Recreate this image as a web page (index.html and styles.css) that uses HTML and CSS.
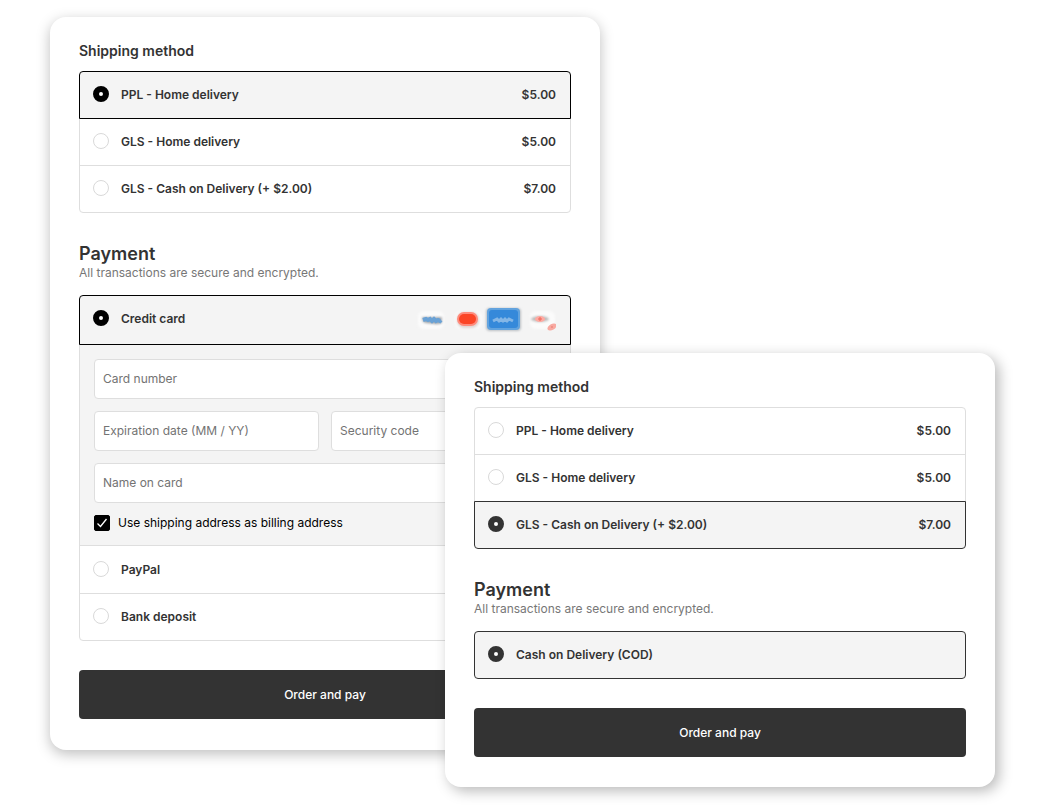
FILE: index.html
```html
<!DOCTYPE html>
<html lang="en">
<head>
<meta charset="utf-8">
<meta name="viewport" content="width=device-width, initial-scale=1">
<title>Checkout</title>
<link rel="stylesheet" href="styles.css">
</head>
<body>
<main class="stage">
  <form class="card">
    <h2 class="heading">Shipping method</h2>
    <div class="options">
      <label class="option"><input class="radio" type="radio" name="ship-a" checked><span class="name">PPL - Home delivery</span><span class="price">$5.00</span></label>
      <label class="option"><input class="radio" type="radio" name="ship-a"><span class="name">GLS - Home delivery</span><span class="price">$5.00</span></label>
      <label class="option"><input class="radio" type="radio" name="ship-a"><span class="name">GLS - Cash on Delivery (+ $2.00)</span><span class="price">$7.00</span></label>
    </div>
    <h2 class="title">Payment</h2>
    <p class="note">All transactions are secure and encrypted.</p>
    <div class="options">
      <label class="option option-tall"><input class="radio" type="radio" name="pay-a" checked><span class="name">Credit card</span>
        <svg class="brands" width="142" height="30" viewBox="0 -2 142 30" aria-hidden="true">
          <defs>
            <filter id="soft" x="-30%" y="-30%" width="160%" height="160%"><feGaussianBlur stdDeviation="1.2"/></filter>
            <filter id="fine" x="-30%" y="-30%" width="160%" height="160%"><feGaussianBlur stdDeviation=".7"/></filter>
          </defs>
          <g filter="url(#soft)">
            <rect x="4" y="5" width="26" height="18" rx="6" fill="#fbfbfb"/>
            <path d="M8 11h20v6q-3 2-8 1l-9-1q-3-1-3-6z" fill="#a0a5aa"/>
            <rect x="41" y="5" width="27" height="18" rx="6" fill="#fafafa"/>
            <rect x="43" y="6" width="22" height="16" rx="7" fill="#e0d4d2"/>
            <rect x="116" y="5" width="25" height="18" rx="6" fill="#fbfbfb"/>
            <ellipse cx="126" cy="13" rx="9" ry="3" fill="#bbb"/>
            <rect x="72" y="2" width="35" height="23" rx="4" fill="#bcc0c4"/>
          </g>
          <g filter="url(#fine)">
            <path d="M9 14l3-1 2 1 2-1 2 2 2-2 2 2 2-1 2 1 1-1" fill="none" stroke="#6aa2d6" stroke-width="4"/>
            <rect x="43" y="6" width="21" height="14" rx="7" fill="#ff8b7c"/>
            <rect x="45" y="8" width="17" height="10" rx="5" fill="#fb4427"/>
            <rect x="73" y="2" width="33" height="22" rx="4" fill="#62a3de"/>
            <rect x="75" y="4" width="29" height="18" rx="3" fill="#3489da"/>
            <path d="M79 15l4-2 2 2 2-2 2 2 2-2 2 2 2-2 4 2" fill="none" stroke="#84b6e6" stroke-width="3"/>
            <ellipse cx="126" cy="13" rx="5" ry="3" fill="#ffaaa2"/>
            <path d="M124 13h4M126 11v4" stroke="#ef6658"/>
            <ellipse cx="138" cy="21" rx="5" ry="3" transform="rotate(-30 138 21)" fill="#f8a9a1"/>
            <path d="M137 21h2" stroke="#e9786d"/>
          </g>
        </svg>
      </label>
      <div class="fields">
        <input class="field wide" type="text" placeholder="Card number" aria-label="Card number">
        <input class="field" type="text" placeholder="Expiration date (MM / YY)" aria-label="Expiration date (MM / YY)">
        <input class="field" type="text" placeholder="Security code" aria-label="Security code">
        <input class="field wide" type="text" placeholder="Name on card" aria-label="Name on card">
        <label class="same wide">
          <span class="tick"><input class="box" type="checkbox" checked>
            <svg class="mark" width="16" height="16" viewBox="0 0 16 16" aria-hidden="true"><path d="M3.5 8.5l3 3 6-7.500" fill="none" stroke="#fff" stroke-width="1.300"/></svg>
          </span>Use shipping address as billing address</label>
      </div>
      <label class="option option-after"><input class="radio" type="radio" name="pay-a"><span class="name">PayPal</span></label>
      <label class="option"><input class="radio" type="radio" name="pay-a"><span class="name">Bank deposit</span></label>
    </div>
    <button class="submit" type="button">Order and pay</button>
  </form>

  <form class="card card-front">
    <h2 class="heading">Shipping method</h2>
    <div class="options">
      <label class="option"><input class="radio" type="radio" name="ship-b"><span class="name">PPL - Home delivery</span><span class="price">$5.00</span></label>
      <label class="option"><input class="radio" type="radio" name="ship-b"><span class="name">GLS - Home delivery</span><span class="price">$5.00</span></label>
      <label class="option"><input class="radio" type="radio" name="ship-b" checked><span class="name">GLS - Cash on Delivery (+ $2.00)</span><span class="price">$7.00</span></label>
    </div>
    <h2 class="title">Payment</h2>
    <p class="note">All transactions are secure and encrypted.</p>
    <div class="options">
      <label class="option"><input class="radio" type="radio" name="pay-b" checked><span class="name">Cash on Delivery (COD)</span></label>
    </div>
    <button class="submit" type="button">Order and pay</button>
  </form>
</main>
</body>
</html>
```

FILE: styles.css
```css
* { box-sizing: border-box; }

body {
  min-height: 100vh;
  margin: 0;
  padding: 17px 53px 17px 50px;
  background: #fff;
  color: #333;
  font: 500 12px/20px Inter, "Liberation Sans", sans-serif;
}

.stage {
  position: relative;
  padding-bottom: 37px;
}

.card {
  --accent: #000;
  width: 58.2%;
  padding: 24px 29px 31px;
  background: #fff;
  border-radius: 16px;
  box-shadow: 0 4px 14px rgba(0, 0, 0, .26);
}

.card-front {
  --accent: #333;
  position: absolute;
  right: 0;
  bottom: 0;
  padding-bottom: 30px;
  box-shadow: 4px 4px 14px rgba(0, 0, 0, .28);
}

.heading {
  margin: 0 0 10px;
  font-size: 14px;
  font-weight: 600;
  line-height: 20px;
}

.title {
  margin: 31px 0 0;
  font-size: 18px;
  font-weight: 600;
  line-height: 20px;
}

.note {
  margin: 0 0 13px;
  color: #777;
  font-weight: 400;
  line-height: 18px;
}

.option {
  position: relative;
  display: flex;
  align-items: center;
  gap: 12px;
  height: 48px;
  margin-top: -1px;
  padding: 0 14px 0 13px;
  border: 1px solid #dedede;
  font-weight: 600;
}

.option:first-child {
  margin-top: 0;
  border-radius: 4px 4px 0 0;
}

.option:last-child { border-radius: 0 0 4px 4px; }
.option:only-child { border-radius: 4px; }
.option-tall { height: 50px; padding-bottom: 3px; }
.option-after { margin-top: 0; border-top: 0; }

.option:has(:checked) {
  z-index: 1;
  background: #f4f4f4;
  border-color: var(--accent);
}

.name { flex: 1; }

.radio {
  flex: none;
  appearance: none;
  width: 16px;
  height: 16px;
  margin: 0 0 2px;
  background: #fff;
  border: 1px solid #d9d9d9;
  border-radius: 50%;
}

.radio:checked { border: 6px solid var(--accent); }

.fields {
  display: grid;
  grid-template-columns: 1fr 1fr;
  gap: 12px;
  margin-top: -1px;
  padding: 14px;
  background: #f4f4f4;
  border: 1px solid #dedede;
}

.wide { grid-column: 1 / -1; }

.field {
  width: 100%;
  min-width: 0;
  height: 40px;
  padding: 0 8px 2px;
  background: #fff;
  border: 1px solid #dedede;
  border-radius: 4px;
  color: #333;
  font: 400 12px/20px Inter, "Liberation Sans", sans-serif;
}

.field::placeholder { color: #737373; opacity: 1; }

.same {
  display: flex;
  align-items: center;
  gap: 8px;
  height: 16px;
  color: #000;
  font-weight: 400;
}

.tick { display: grid; }
.box, .mark { grid-area: 1 / 1; }

.box {
  appearance: none;
  width: 16px;
  height: 16px;
  margin: 0;
  background: #fff;
  border: 1px solid #000;
  border-radius: 2px;
}

.box:checked { background: #000; }
.mark { pointer-events: none; }

.submit {
  display: block;
  width: 100%;
  height: 49px;
  margin-top: 29px;
  background: #333;
  border: 0;
  border-radius: 4px;
  color: #fff;
  font: 500 12px/20px Inter, "Liberation Sans", sans-serif;
}
```
